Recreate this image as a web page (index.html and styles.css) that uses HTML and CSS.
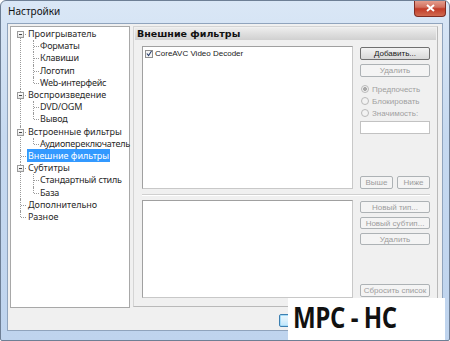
FILE: index.html
```html
<!DOCTYPE html>
<html lang="ru">
<head>
    <meta charset="UTF-8">
    <title>Настройки</title>
    <link rel="stylesheet" href="styles.css">
</head>
<body>
    <div class="window">
        <div class="titlebar">
            <span class="title">Настройки</span>
            <div class="close">
                <svg width="9" height="8" viewBox="0 0 9 8"><path d="M1 1 L8 7 M8 1 L1 7" stroke="#fff" stroke-width="2"/></svg>
            </div>
        </div>

        <div class="client">
            <div class="main">
                <!-- Navigation tree -->
                <div class="tree">
                    <ul class="level1">
                        <li class="first"><span class="exp"></span><span class="label">Проигрыватель</span>
                            <ul class="level2">
                                <li><span class="label">Форматы</span></li>
                                <li><span class="label">Клавиши</span></li>
                                <li><span class="label">Логотип</span></li>
                                <li><span class="label">Web-интерфейс</span></li>
                            </ul>
                        </li>
                        <li><span class="exp"></span><span class="label">Воспроизведение</span>
                            <ul class="level2">
                                <li><span class="label">DVD/OGM</span></li>
                                <li><span class="label">Вывод</span></li>
                            </ul>
                        </li>
                        <li><span class="exp"></span><span class="label">Встроенные фильтры</span>
                            <ul class="level2">
                                <li><span class="label">Аудиопереключатель</span></li>
                            </ul>
                        </li>
                        <li><span class="label selected">Внешние фильтры</span></li>
                        <li><span class="exp"></span><span class="label">Субтитры</span>
                            <ul class="level2">
                                <li><span class="label">Стандартный стиль</span></li>
                                <li><span class="label">База</span></li>
                            </ul>
                        </li>
                        <li><span class="label">Дополнительно</span></li>
                        <li><span class="label">Разное</span></li>
                    </ul>
                </div>

                <!-- Page -->
                <div class="page">
                    <div class="page-header">Внешние фильтры</div>
                    <div class="page-body">
                        <div class="section top">
                            <div class="listbox big">
                                <div class="list-item"><span class="check">
                                    <svg width="7" height="7" viewBox="0 0 7 7"><path d="M1 3.5 L3 6 L6.5 0.5" fill="none" stroke="#2a3f6d" stroke-width="1.3"/></svg>
                                </span>CoreAVC Video Decoder</div>
                            </div>
                            <div class="side">
                                <button class="btn primary add">Добавить...</button>
                                <button class="btn off del">Удалить</button>
                                <div class="radios">
                                    <div class="radio on">Предпочесть</div>
                                    <div class="radio">Блокировать</div>
                                    <div class="radio">Значимость:</div>
                                </div>
                                <div class="textbox"></div>
                                <div class="pair">
                                    <button class="btn off">Выше</button>
                                    <button class="btn off">Ниже</button>
                                </div>
                            </div>
                        </div>
                        <div class="separator"></div>
                        <div class="section bottom">
                            <div class="listbox small"></div>
                            <div class="side">
                                <button class="btn off">Новый тип...</button>
                                <button class="btn off">Новый субтип...</button>
                                <button class="btn off">Удалить</button>
                                <button class="btn off reset">Сбросить список</button>
                            </div>
                        </div>
                    </div>
                </div>
            </div>

            <!-- Dialog buttons, hidden under the watermark -->
            <div class="footer">
                <button class="btn primary focus"></button>
                <button class="btn primary"></button>
                <button class="btn off"></button>
            </div>
        </div>

        <div class="stamp"><span>MPC - HC</span></div>
    </div>
</body>
</html>
```

FILE: styles.css
```css
* {
    box-sizing: border-box;
}
body {
    margin: 0;
    font-family: "Noto Sans", "DejaVu Sans", sans-serif;
    font-size: 9px;
    color: #1e1e1e;
}
.window {
    position: relative;
    width: 450px;
    height: 341px;
    background: linear-gradient(#dae7f6, #c6d9f0 40%, #bfd4ee);
    border: 1px solid #6e7f95;
    border-radius: 6px 6px 2px 2px;
    overflow: hidden;
    display: flex;
    flex-direction: column;
}
.titlebar {
    height: 22px;
    display: flex;
    justify-content: space-between;
    align-items: flex-start;
    padding-left: 7px;
}
.title {
    font-size: 10px;
    color: #111;
    margin-top: 3px;
}
.close {
    width: 32px;
    height: 17px;
    margin-right: 3px;
    margin-top: -1px;
    background: linear-gradient(#e8a493, #d1705f 45%, #c23b27 55%, #d06a50);
    border: 1px solid #7f2c22;
    border-top: none;
    border-radius: 0 0 4px 4px;
    display: flex;
    align-items: center;
    justify-content: center;
}
.client {
    margin: 0 6px;
    height: 308px;
    background: #f0f0f0;
    border: 1px solid #90a4bd;
    padding: 2px 3px 0 2px;
}

.main {
    display: flex;
    gap: 3px;
}

/* Tree */
.tree {
    width: 120px;
    height: 282px;
    background: #fff;
    border: 1px solid #a8a8a8;
    padding-top: 1px;
    color: #2a2a2a;
}
.tree ul {
    list-style: none;
    margin: 0;
    padding: 0;
}
.tree li {
    position: relative;
    line-height: 12.2px;
}
.level1 > li {
    padding-left: 16px;
}
.level2 > li {
    padding-left: 12px;
}
.level1 > li::before,
.level2 > li::before {
    content: "";
    position: absolute;
    top: 0;
    bottom: 0;
    border-left: 1px dotted #9a9a9a;
}
.level1 > li::before {
    left: 9px;
}
.level2 > li::before {
    left: 6px;
}
.level1 > li.first::before {
    top: 6px;
}
.level1 > li:last-child::before,
.level2 > li:last-child::before {
    bottom: auto;
    height: 6px;
}
.level1 > li::after,
.level2 > li::after {
    content: "";
    position: absolute;
    top: 6px;
    width: 5px;
    border-top: 1px dotted #9a9a9a;
}
.level1 > li::after {
    left: 10px;
}
.level2 > li::after {
    left: 7px;
}
.exp {
    position: absolute;
    left: 6px;
    top: 3px;
    width: 7px;
    height: 7px;
    border: 1px solid #9b9b9b;
    background: linear-gradient(#fff, #e4e4e4);
    z-index: 1;
}
.exp::after {
    content: "";
    position: absolute;
    left: 1px;
    top: 2px;
    width: 3px;
    border-top: 1px solid #444;
}
.label {
    padding: 0 1px;
    white-space: nowrap;
}
.level2 .label {
    letter-spacing: -0.2px;
}
.label.selected {
    background: #3399ff;
    color: #fff;
}

/* Page */
.page {
    width: 305px;
    height: 281px;
    border: 1px solid #d4d4d4;
    border-right-color: #b9b9b9;
    border-bottom-color: #b9b9b9;
}
.page-header {
    margin: 1px;
    height: 12px;
    line-height: 12px;
    padding-left: 2px;
    font-family: "DejaVu Sans", sans-serif;
    font-size: 9.5px;
    font-weight: bold;
    color: #111;
    background: linear-gradient(#ececec, #d0d0d0);
}
.page-body {
    padding: 5px 6px 0 8px;
}
.section {
    display: flex;
    gap: 7px;
}
.listbox {
    width: 211px;
    background: #fff;
    border: 1px solid #a0a0a0;
    border-right-color: #c8c8c8;
    border-bottom-color: #c8c8c8;
}
.listbox.big {
    height: 143px;
}
.listbox.small {
    height: 98px;
}
.list-item {
    display: flex;
    align-items: center;
    padding: 2px 2px;
    font-family: "Liberation Sans", sans-serif;
    font-size: 8px;
    color: #222;
}
.check {
    width: 8px;
    height: 8px;
    border: 1px solid #8f8f8f;
    background: #f4f4f4;
    margin-right: 2px;
    display: flex;
    align-items: center;
    justify-content: center;
}
.side {
    width: 70px;
    display: flex;
    flex-direction: column;
}
.btn {
    font-family: "Liberation Sans", sans-serif;
    font-size: 8px;
    height: 13px;
    line-height: 11px;
    padding: 0;
    border-radius: 2px;
    white-space: nowrap;
    overflow: hidden;
}
.btn.primary {
    border: 1px solid #707070;
    background: linear-gradient(#f3f3f3, #e6e6e6 50%, #d8d8d8);
    color: #1a1a1a;
}
.btn.off {
    border: 1px solid #adb2b5;
    background: #f4f4f4;
    color: #9d9d9d;
}
.top .add {
    margin-top: 1px;
}
.top .del {
    margin-top: 4px;
}
.radios {
    margin-top: 6px;
}
.radio {
    display: flex;
    align-items: center;
    height: 12px;
    font-family: "Liberation Sans", sans-serif;
    font-size: 8px;
    color: #a0a0a0;
}
.radio::before {
    content: "";
    width: 8px;
    height: 8px;
    border-radius: 50%;
    border: 1px solid #b9b9b9;
    background: #f2f2f2;
    margin: 0 3px 0 1px;
    box-sizing: border-box;
}
.radio.on::before {
    background: radial-gradient(circle, #a9a9a9 0 1.8px, #f2f2f2 2.2px);
}
.textbox {
    margin-top: 2px;
    height: 13px;
    background: #fff;
    border: 1px solid #c2c2c2;
}
.pair {
    margin-top: auto;
    display: flex;
    justify-content: space-between;
}
.pair .btn {
    width: 33px;
}
.separator {
    width: 288px;
    margin-top: 5px;
    border-top: 1px solid #d0d0d0;
    border-bottom: 1px solid #fff;
}
.section.bottom {
    margin-top: 4px;
}
.bottom .side .btn {
    margin-top: 1px;
    margin-bottom: 3px;
    height: 12px;
}
.bottom .side .reset {
    margin-top: auto;
    margin-bottom: 1px;
    height: 13px;
}

/* Dialog buttons */
.footer {
    display: flex;
    justify-content: flex-end;
    gap: 5px;
    padding: 6px 0 0;
}
.footer .btn {
    width: 50px;
}
.footer .focus {
    border-color: #3c7fb1;
    background: linear-gradient(#eaf6fd, #d9f0fc 50%, #bee6fd);
    box-shadow: inset 0 0 0 1px #a6dcf7;
}

/* Watermark */
.stamp {
    position: absolute;
    left: 287px;
    top: 297px;
    width: 157px;
    height: 44px;
    background: #fff;
    padding: 0 0 0 5px;
    white-space: nowrap;
}
.stamp span {
    display: inline-block;
    font-family: "Open Sans", "Noto Sans", sans-serif;
    font-weight: bold;
    font-size: 28px;
    line-height: 38px;
    color: #111;
    letter-spacing: -0.5px;
    transform: scaleX(0.86);
    transform-origin: left center;
}
```
